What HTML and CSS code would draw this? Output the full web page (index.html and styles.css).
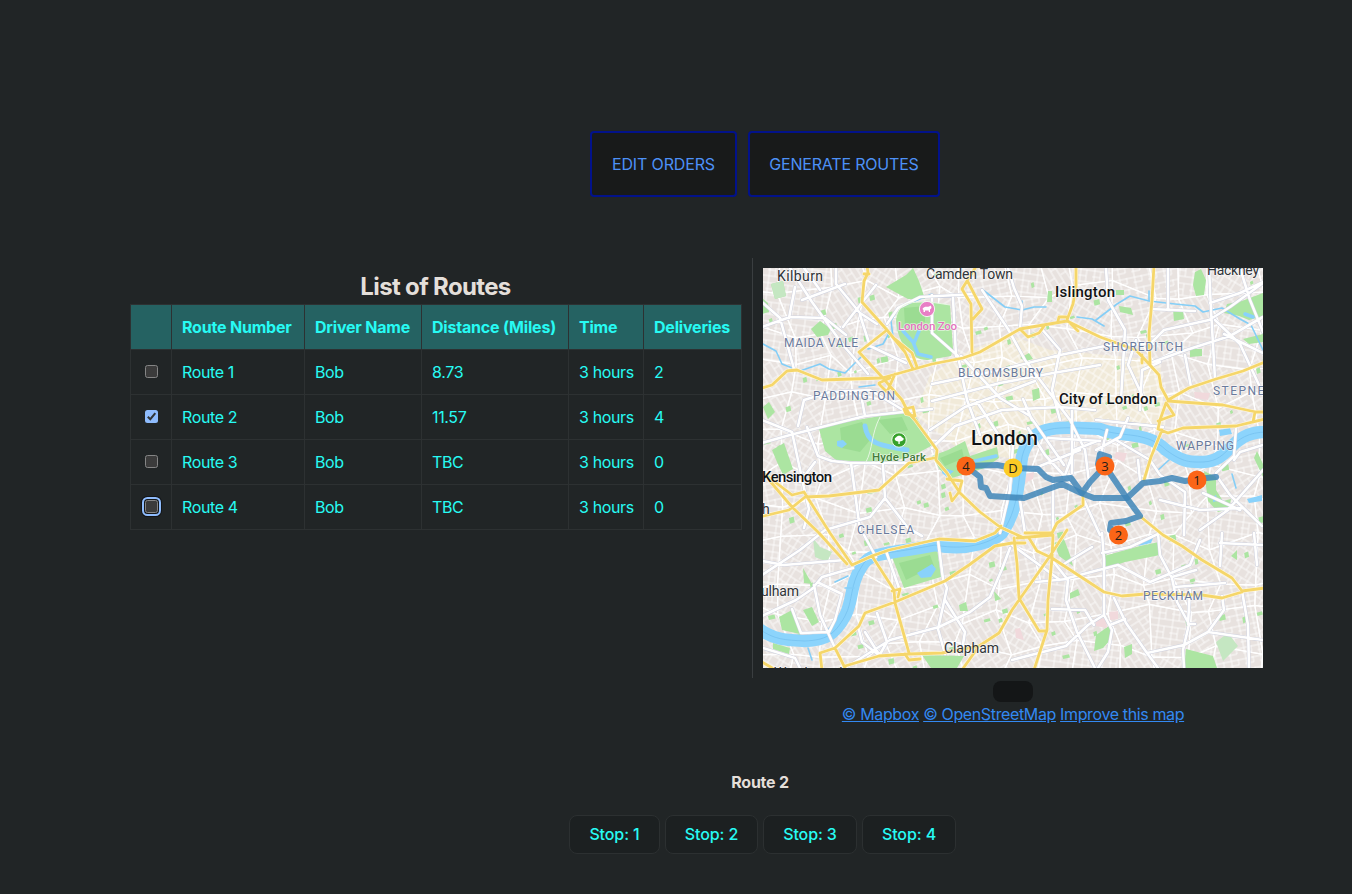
FILE: index.html
```html
<!DOCTYPE html>
<html lang="en">
<head>
<meta charset="utf-8">
<title>Routes</title>
<link rel="stylesheet" href="styles.css">
</head>
<body>
<nav class="actions">
  <button class="action edit"><span>EDIT ORDERS</span></button>
  <button class="action generate"><span>GENERATE ROUTES</span></button>
</nav>
<main class="content">
  <section class="routes">
    <h2>List of Routes</h2>
    <table>
      <colgroup><col class="c1"><col class="c2"><col class="c3"><col class="c4"><col class="c5"><col class="c6"></colgroup>
      <thead><tr><th></th><th>Route Number</th><th>Driver Name</th><th>Distance (Miles)</th><th>Time</th><th>Deliveries</th></tr></thead>
      <tbody>
        <tr><td><i class="box"></i></td><td>Route 1</td><td>Bob</td><td>8.73</td><td>3 hours</td><td>2</td></tr>
        <tr><td><i class="box checked"><svg viewBox="0 0 13 13"><path d="M2.8 6.7 5.3 9.2 10.3 3.2"/></svg></i></td><td>Route 2</td><td>Bob</td><td>11.57</td><td>3 hours</td><td>4</td></tr>
        <tr><td><i class="box"></i></td><td>Route 3</td><td>Bob</td><td>TBC</td><td>3 hours</td><td>0</td></tr>
        <tr><td><i class="box focused"></i></td><td>Route 4</td><td>Bob</td><td>TBC</td><td>3 hours</td><td>0</td></tr>
      </tbody>
    </table>
  </section>
  <section class="map-panel">
    <svg class="map" viewBox="763 268 500 400">
      <defs>
        <pattern id="p0" width="15" height="11" patternUnits="userSpaceOnUse" patternTransform="rotate(-12)"><path class="st" d="M0 1H15M0 6H9M2 0V11M9 0V6"/></pattern>
        <pattern id="p1" width="13" height="17" patternUnits="userSpaceOnUse" patternTransform="rotate(32)"><path class="st" d="M0 2H13M0 10H13M1 0V17M7 2V10M10 10V17"/></pattern>
        <pattern id="p2" width="18" height="12" patternUnits="userSpaceOnUse" patternTransform="rotate(-33)"><path class="st" d="M0 1H18M5 7H18M5 1V12M12 0V7"/></pattern>
        <pattern id="p3" width="14" height="19" patternUnits="userSpaceOnUse" patternTransform="rotate(8)"><path class="st" d="M0 2H14M0 8H8M0 14H14M2 0V19M8 2V14"/></pattern>
        <pattern id="p4" width="16" height="13" patternUnits="userSpaceOnUse" patternTransform="rotate(58)"><path class="st" d="M0 1H16M0 7H16M3 1V7M11 7V13"/></pattern>
      </defs>
      <rect class="land" x="763" y="268" width="500" height="400"/>
      <path class="urban" d="M930 375 970 350 1010 335 1050 350 1160 360 1165 425 1060 420 1030 430 1020 460 960 450 915 415Z"/>
      <g id="blocks"></g>
      <g class="park">
        <path d="M886 287 906 275 913 268 919 281 925 299 908 299 895 292Z"/>
        <path d="M771 284 783 281 786 296 775 299ZM762 298 768 303 769 312 762 314ZM811 329 820 321 831 329 828 335 817 337Z"/>
        <path d="M896 318C899 301 913 302 930 302L950 305 953 349 951 356 928 360C911 361 896 341 896 318Z"/>
        <path d="M819 429 840 423 880 416 905 413 916 417 933 445 912 456 885 463 836 460 825 451Z"/>
        <path d="M932 456 948 450 965 441 970 456 997 447 999 458 985 468 965 474 952 478 940 470Z"/>
        <path d="M772 450 784 443 793 469 783 475 777 462Z"/>
        <path d="M892 557 937 548 941 577 904 588Z"/>
        <path d="M779 617 792 610 800 634 782 630ZM803 610 812 607 819 622 812 626ZM773 643 790 648 789 654 773 649ZM803 568 812 584 804 583Z"/>
        <path d="M922 655 964 656 957 668 931 668ZM959 605 966 602 968 611 960 611ZM994 591 1001 599 995 601Z"/>
        <path d="M1195 272 1201 269 1206 280 1204 295 1196 296 1193 285ZM1227 304 1242 301 1263 293 1263 316 1249 320 1239 316 1224 313Z"/>
        <path d="M1119 306 1131 308 1133 315 1120 312ZM1173 309 1183 311 1184 319 1174 321ZM1190 349 1202 349 1202 356 1190 357ZM1243 339 1263 334 1263 342 1249 344Z"/>
        <path d="M1204 471 1216 477 1216 490 1223 501 1231 499 1229 509 1218 512 1208 501Z"/>
        <path d="M1104 556 1140 546 1159 542 1160 555 1125 562 1105 569ZM1054 543 1064 539 1070 555 1073 566 1059 556ZM1070 593 1078 589 1080 595 1070 599Z"/>
        <path d="M1096 635 1109 626 1112 638 1103 648 1094 651ZM1186 649 1213 656 1217 668 1184 668ZM1124 647 1132 644 1132 654 1125 658ZM1231 556 1237 550 1237 560Z"/>
        <path d="M1020 358 1029 353 1033 359 1026 361ZM1032 390 1039 388 1040 398 1033 401ZM1048 291 1052 291 1052 302 1047 302ZM763 407 769 402 775 412 768 419ZM1257 451 1263 464 1263 477 1254 458ZM1116 290 1124 290 1124 295 1116 295Z"/>
        <path id="greens"/>
      </g>
      <path class="park-light" d="M813 538 820 547 832 552 827 562 815 557ZM1216 642 1228 633 1238 646 1223 661ZM771 284 783 281 786 296 775 299Z"/>
      <path class="park-shade" d="M840 428 862 422 870 440 860 452 842 448ZM878 420 902 417 908 430 890 434ZM904 308 925 306 925 322 905 326ZM899 563 930 555 934 566 906 580ZM940 458 962 449 964 458 945 466Z"/>
      <path class="hospital" d="M1095 619 1106 618 1107 628 1096 626ZM1109 612 1118 611 1118 619 1110 620ZM1015 629 1020 628 1024 640 1016 638ZM1026 474 1034 472 1033 479 1025 483ZM1116 452 1127 453 1124 462 1114 458ZM1194 392 1210 393 1208 400 1195 398Z"/>
      <g class="river">
        <path d="M759 629C775 640 785 640 805 641C825 640 834 636 845 616C853 602 850 583 862 566C870 552 883 555 935 545C970 552 995 540 1002 533C1018 510 1018 485 1022 457C1030 423 1060 427 1100 429C1120 438 1146 430 1166 450C1184 463 1190 462 1203 462C1232 461 1228 432 1267 432"/>
      </g>
      <path class="river-line" d="M759 629C775 640 785 640 805 641C825 640 834 636 845 616C853 602 850 583 862 566C870 552 883 555 935 545C970 552 995 540 1002 533C1018 510 1018 485 1022 457C1030 423 1060 427 1100 429C1120 438 1146 430 1166 450C1184 463 1190 462 1203 462C1232 461 1228 432 1267 432"/>
      <path class="pond" d="M865 426C868 446 882 445 907 450"/>
      <path class="pond thin" d="M903 331 913 342 918 354 931 357M914 343 919 331M1245 314 1253 317M975 461 996 456"/>
      <path class="lake" d="M837 441 843 440 847 444 842 448 837 446ZM943 468 954 471 947 477 942 473ZM917 573 932 564 936 569 931 577 921 578ZM1138 546 1148 538 1153 538 1151 543ZM1247 499 1262 495 1262 501 1249 503ZM1213 497 1216 495 1217 501 1213 502ZM1219 430 1230 428 1232 434 1220 436Z"/>
      <path class="canal" d="M763 344 776 351 782 364 800 371 820 364 829 369 845 373 861 357M868 349 883 344 888 335M893 337 891 321 898 308 932 294M859 387 875 385M983 290 1005 307 1022 310 1034 307 1046 307M1077 317 1092 319 1104 326M1096 320 1117 304 1130 296 1149 301 1175 304 1195 306 1203 312 1222 308 1240 319 1251 325 1263 350M1022 311V301M1149 301V291M835 582 848 576M845 588 854 588M808 648 812 660M1232 474 1236 488M1158 470 1169 460"/>
      <path class="major-case" id="majorCase"/>
      <path class="major" id="major" d="M790 268 812 302 843 345 868 374M762 327 790 317 825 318 846 335M789 318 795 287M763 303 780 318 794 369M836 268 836 284 860 313 877 324M843 327 853 314 876 285M802 300 845 284M860 315 870 346 906 363M762 443 790 435 865 416 932 409M804 268 820 290M887 324 898 308 920 297 975 294M953 298 956 356M807 427 818 456 832 461 850 463 909 463M762 420 792 432 804 488 809 509 804 528M798 426 804 400 830 392 870 390 903 410M865 416 862 400M851 463 860 530M815 462 800 482M883 465 885 498 870 517 825 530 800 550 762 575M885 498 908 528 922 536M864 535 876 557M853 568 822 577 812 589 796 600 762 616M762 561 784 565 845 560M814 585 820 615 835 648M819 583 842 594 835 620 829 632 801 633 792 609M763 648 795 658 800 668M886 551 899 588M938 540 943 579 947 588 938 629 945 654M877 613 887 642 879 656M845 668 890 640 939 627 970 612 990 597 1002 569 1010 548M945 600 965 632 962 650M865 632 880 656M858 626 862 642 880 656M932 295 932 333 958 356 967 400 980 435M932 384 1000 370 1060 355 1110 345 1153 344M932 401 1000 383 1053 373 1100 365M1020 329 1022 306 1014 288 1008 268M982 290 1008 329 1025 360 1070 420 1085 450 1090 490M1040 327 1060 350 1052 390 1060 420M961 356 1000 398 1030 416 1064 465M930 430 965 407 1001 394 1035 381M932 448 955 426 1002 410 1060 407 1095 410M1023 399 1032 420M977 402 998 434 1013 444 1010 490 1000 533M1072 408 1072 473M1048 438 1100 441M1064 478 1074 450 1097 441M1028 428 1045 455 1070 482M1030 470 1080 450M1053 478 1053 533M1096 420 1163 427M1096 450 1120 437 1128 418M1100 458 1107 430M1116 440 1150 460 1160 475 1185 492 1184 535M1138 460 1140 480M1236 428 1234 456 1216 473M1216 475 1230 495 1262 526M1263 445 1240 452 1234 460M1203 493 1240 510M1160 500 1200 510 1243 508M1200 530 1228 510 1263 470M1083 498 1100 535M1020 500 1025 533M1106 268 1108 300 1125 330 1121 400M1136 340 1128 365 1142 395M1150 344 1164 330 1209 320 1230 307 1263 283M1209 268 1211 310 1215 379M1151 309 1195 311M1150 363 1186 350 1230 336 1263 317M1215 320 1240 344 1259 385M1168 310V268M1210 303 1240 293 1263 282M1224 334 1263 353M1140 410 1142 370 1160 362M1185 355 1191 387M1240 268 1250 300 1263 332M1102 533 1104 560 1104 615 1112 630 1108 652 1098 668M1104 615 1088 625 1066 646 1012 660M1052 560 1068 580 1066 600 1077 632 1095 668M1068 578 1118 565 1150 582 1190 565 1200 540M1064 564 1092 547M1102 553 1130 547 1160 533M1114 598 1126 623 1147 653 1158 668M1110 625 1125 619M1158 533 1160 555 1172 578 1177 602 1189 624 1183 650 1184 668M1147 653 1184 645 1208 632 1224 610 1222 596M1242 591 1248 625 1249 668M1208 632 1263 640M1220 566 1222 533M1172 577 1196 570M1220 543 1263 545M1175 587 1225 583M1188 624 1195 624M1190 590 1188 624M1254 533 1257 565M1012 545 1060 580M1036 582 1067 579M1052 609 1085 610 1094 625"/>
      <g class="yellow-case" id="yellowCase"></g>
      <path class="yellow" id="yellow" d="M867 265 868 273 864 281 862 302 887 330 905 352 913 369M869 274 864 274M895 339 912 353 917 367M887 330 859 352 882 377 902 400 908 412 915 420 937 450 936 460 947 473 960 493 980 512 1000 527 1024 538M879 383 890 378M879 384 887 392 895 374M904 409 913 407 915 416 906 414ZM759 389 772 385 787 371 797 370 822 380 882 378 932 364 963 358 980 352 1020 329 1067 321 1100 337 1136 350 1149 364 1159 375 1161 387 1168 400 1189 388 1216 379 1243 371 1265 362M977 265 962 289 971 304 972 352M968 282 982 309 973 319M1020 329 1028 337 1039 333 1044 326M1058 321 1059 317 1066 317M1076 265 1076 287 1073 304 1067 320 1078 331M1154 265 1152 300 1149 334 1150 364M1142 355 1142 363M1168 401 1223 405 1256 412 1265 412M1166 403 1160 420 1158 429 1168 433 1183 428 1236 426 1265 419M1167 404 1174 415 1158 421M1255 412 1253 422M1162 430 1151 457 1144 480M1141 517 1163 535 1182 546 1202 560 1232 578 1242 591 1265 588M1242 592 1222 598 1202 595 1145 594 1122 596 1104 592 1052 558 1037 551 1029 538M1083 491 1083 505 1057 523 1052 533 1025 533M1067 530 1050 556 1012 610 999 633 979 646 942 653 909 654 879 656 845 666M1052 558 1048 600 1047 630 1034 670M1014 538 1017 563 1019 598 1039 631 1045 631M1052 558 1053 535 1017 538M759 517 789 510 805 497 829 496 879 490 909 463 934 458M762 472 792 495 804 492 830 533 852 565 872 556 889 550 939 539 975 541 995 533 1001 526M769 480 792 507 819 533 847 564M947 479 962 481 959 492 952 501 950 493M1025 543 1012 543 995 546 969 565 945 581 895 602 865 613 859 626 835 648 820 653 822 670M872 556 894 590 895 603 909 653M892 591 900 589 898 597M835 648 846 670M905 654 909 660 920 659M962 670 979 646M760 661 774 669"/>
      <path class="zoo-edge" d="M896 318C899 301 913 302 930 302L950 305M880 417C871 434 873 449 866 462"/>
      <g class="label town">
        <text x="777" y="281" textLength="46">Kilburn</text><text x="926" y="279" textLength="87">Camden Town</text><text x="1207" y="275" textLength="52">Hackney</text>
        <text x="944" y="653" textLength="55">Clapham</text><text x="761" y="596" textLength="38">ulham</text><text x="762" y="514">h</text><text x="774" y="678" textLength="73">Wandsworth</text>
      </g>
      <g class="label city">
        <text x="1055" y="297" textLength="60">Islington</text><text x="1059" y="404" textLength="98">City of London</text><text x="762" y="482" textLength="70">Kensington</text>
        <text class="capital" x="971" y="445" textLength="67">London</text>
      </g>
      <g class="label area">
        <text x="784" y="347" textLength="74">MAIDA VALE</text><text x="813" y="400" textLength="82">PADDINGTON</text><text x="958" y="377" textLength="85">BLOOMSBURY</text>
        <text x="1103" y="351" textLength="80">SHOREDITCH</text><text x="1213" y="395" textLength="60">STEPNEY</text><text x="1176" y="450" textLength="58">WAPPING</text><text x="857" y="534" textLength="57">CHELSEA</text><text x="1143" y="600" textLength="60">PECKHAM</text>
      </g>
      <g class="label poi"><text class="zoo" x="898" y="330" textLength="59">London Zoo</text><text class="hyde" x="872" y="461" textLength="54">Hyde Park</text></g>
      <circle cx="927" cy="309" r="7.6" fill="#e87fc5" stroke="#fff" stroke-width=".8"/><path d="M922.5 309C924 306 927 307 929 306.5L931 305.5 931.5 308 930 309.5 930 312H928.8V310.5H925V312H923.5V310Z" fill="#fff"/>
      <circle cx="899" cy="440" r="7.2" fill="#36a12a" stroke="#fff" stroke-width=".8"/><path d="M898.4 444V441.5C894 441.5 894 438 896 437.6C897 435 901.5 435 902 437.6C905 438 904 441.5 899.7 441.5V444Z" fill="#fff"/>
      <g class="route">
        <path d="M966 466 997 465 1013 468 1038 469 1046 477 1053 480 1071 478 1082 493 1090 482 1105 466 1109 457 1100 454 1098 464 1105 466 1126 497 1140 516 1126 521 1111 523 1110 530 1118 535"/>
        <path d="M966 466 980 477 981 487 986 488 990 496 1024 498 1062 484 1081 493 1094 498 1127 498 1143 483 1160 481 1172 478 1185 481 1197 479 1216 477"/>
      </g>
      <g class="pins">
        <circle cx="966" cy="466" r="9.5"/><text x="966" y="471">4</text>
        <circle class="depot" cx="1013" cy="468" r="9.5"/><text x="1013" y="473">D</text>
        <circle cx="1105" cy="466" r="9.5"/><text x="1105" y="471">3</text>
        <circle cx="1197" cy="480" r="9.5"/><text x="1197" y="485">1</text>
        <circle cx="1118.500" cy="535" r="9.5"/><text x="1118.500" y="540">2</text>
      </g>
    </svg>
    <div class="chip"></div>
    <p class="credits"><a>© Mapbox</a> <a>© OpenStreetMap</a> <a>Improve this map</a></p>
  </section>
</main>
<section class="selected">
  <h3>Route 2</h3>
  <div class="stops"><button>Stop: 1</button><button>Stop: 2</button><button>Stop: 3</button><button>Stop: 4</button></div>
</section>
<script src="map.js"></script>
</body>
</html>
```
FILE: styles.css
```css
* { box-sizing: border-box; }
body { margin: 0; height: 894px; overflow: hidden; background: #212526; color: #e4dfda; font: 16px/24px Inter, sans-serif; }
.actions { display: flex; gap: 11px; padding: 131px 0 0 590px; }
.action { height: 66px; padding: 0; border: 2px solid #02128a; border-radius: 4px; background: #181a1a; color: #4d91f7; font: 16px/24px Inter, sans-serif; }
.edit { width: 147px; letter-spacing: -.14px; }
.generate { width: 192px; letter-spacing: -.2px; }
.content { display: flex; padding: 61px 0 0 130px; }
.routes { width: 623px; height: 420px; padding: 15px 11px 0 0; border-right: 1px solid #3a3e40; }
h2 { margin: 0; height: 31px; font-size: 24px; line-height: 28px; font-weight: 700; letter-spacing: -.65px; text-align: center; }
table { width: 612px; table-layout: fixed; border-collapse: collapse; color: #27fbf4; }
.c1 { width: 41px; } .c2 { width: 133px; } .c3 { width: 117px; } .c4 { width: 147px; } .c5 { width: 75px; } .c6 { width: 98px; }
th, td { height: 45px; padding: 0 0 0 10px; border: 1px solid #2d3132; text-align: left; white-space: nowrap; letter-spacing: -.36px; }
th { background: #256262; font-weight: 700; letter-spacing: -.2px; }
.box { display: block; width: 13px; height: 13px; margin: -1px 0 0 4px; border: 1px solid #858585; border-radius: 2.500px; background: #3b3b3b; }
.box.checked { border: 0; background: #8fbcfd; }
.box svg { display: block; fill: none; stroke: #303436; stroke-width: 2; }
.box.focused { outline: 2px solid #8fbcfd; outline-offset: 1px; box-shadow: 0 0 0 1px #151718, 0 0 0 4px #121416; }
.map-panel { width: 500px; margin-left: 10px; padding-top: 10px; }
.map { display: block; width: 500px; height: 400px; }
.chip { width: 40px; height: 21px; margin: 13px auto 0; border-radius: 8px; background: #141617; }
.credits { margin: 0; text-align: center; letter-spacing: -.37px; white-space: nowrap; color: #3389f2; }
.credits a { text-decoration: underline; }
.selected { display: flex; flex-direction: column; align-items: center; padding: 44px 0 0 173px; }
h3 { margin: 0 5px 21px 0; font-size: 16px; line-height: 24px; font-weight: 700; letter-spacing: -.25px; }
.stops { display: flex; gap: 5px; }
.stops button { width: 93px; height: 39px; padding: 0 0 1px; border: 1px solid #2c3031; border-radius: 8px; background: #1c2021; color: #27fbf4; font: 500 16px/24px Inter, sans-serif; letter-spacing: -.1px; }
.stops button:first-child { width: 91px; }
.stops button:nth-child(n+3) { width: 94px; }
.land { fill: #e8e2df; } .urban { fill: #f1ead9; }
.st { fill: none; stroke: #fff; stroke-width: 1; opacity: .8; }
.block { stroke: #fff; stroke-width: 1.2; }
.park { fill: #ace5a2; } .park-light { fill: #c5e7c2; } .park-shade { fill: #9bdc92; } .hospital { fill: #f1d9dc; }
.river path, .river-line, .pond, .canal, .major, .major-case, .yellow, .yellow-case path, .route path, .zoo-edge { fill: none; stroke-linejoin: round; stroke-linecap: round; }
.river path { stroke: #8cd4fc; stroke-width: 12.500; }
.river-line { stroke: #72bfee; stroke-width: .7; }
.pond { stroke: #89d2fb; stroke-width: 5; } .pond.thin { stroke-width: 3.500; } .lake { fill: #89d2fb; }
.canal { stroke: #84cef7; stroke-width: 1.6; }
.major-case { stroke: #cfd2df; stroke-width: 3.6; } .major { stroke: #fff; stroke-width: 2.6; }
.yellow-case path { stroke: #fff8e3; stroke-width: 3.8; } .yellow { stroke: #f5d66a; stroke-width: 2.800; }
.zoo-edge { stroke: #e6f6e2; stroke-width: 1; }
.label { font-family: Roboto, sans-serif; paint-order: stroke; stroke: #fff; stroke-opacity: .6; stroke-width: 1.6px; stroke-linejoin: round; }
.town { font-size: 14px; fill: #303438; }
.city { font-size: 15px; font-weight: 500; fill: #101214; } .capital { font-size: 20px; }
.area { font-size: 12px; fill: #6a7a9c; }
.poi { font-size: 11.500px; font-weight: 500; } .zoo { fill: #e374bd; } .hyde { fill: #437c3a; }
.route path { stroke: #3f86b9; stroke-width: 6; stroke-opacity: .85; }
.pins circle { fill: #fb6517; } .pins .depot { fill: #fccb25; }
.pins text { fill: #241d17; font: 13px "Open Sans", sans-serif; text-anchor: middle; }
```
FILE: map.js
```js
// Seeded generator keeps the street blocks identical on every load.
let seed = 11;
function rnd() { seed = (seed * 16807) % 2147483647; return seed / 2147483647; }
const NS = 'http://www.w3.org/2000/svg';
const step = 36, cols = 15, rows = 12, pts = [];
for (let r = 0; r <= rows; r++) {
  pts.push([]);
  for (let c = 0; c <= cols; c++) pts[r].push([750 + c * step + rnd() * 22 - 11, 255 + r * step + rnd() * 22 - 11]);
}
const blocks = document.getElementById('blocks');
for (let r = 0; r < rows; r++) for (let c = 0; c < cols; c++) {
  const p = document.createElementNS(NS, 'polygon');
  p.setAttribute('points', [pts[r][c], pts[r][c + 1], pts[r + 1][c + 1], pts[r + 1][c]].map(q => q.map(v => v.toFixed(1)).join(',')).join(' '));
  p.setAttribute('fill', 'url(#p' + Math.floor(rnd() * 5) + ')');
  p.setAttribute('class', 'block');
  blocks.appendChild(p);
}
// Small garden squares scattered between the streets.
let d = '';
for (let i = 0; i < 130; i++) {
  const x = 763 + rnd() * 500, y = 268 + rnd() * 400, w = 2 + rnd() * 5, h = 2 + rnd() * 4;
  d += `M${x.toFixed(1)} ${y.toFixed(1)}l${w.toFixed(1)} -1.500 1 ${h.toFixed(1)} ${(-w).toFixed(1)} 1.500z`;
}
document.getElementById('greens').setAttribute('d', d);
document.getElementById('majorCase').setAttribute('d', document.getElementById('major').getAttribute('d'));
const edge = document.createElementNS(NS, 'path');
edge.setAttribute('d', document.getElementById('yellow').getAttribute('d'));
document.getElementById('yellowCase').appendChild(edge);
```
